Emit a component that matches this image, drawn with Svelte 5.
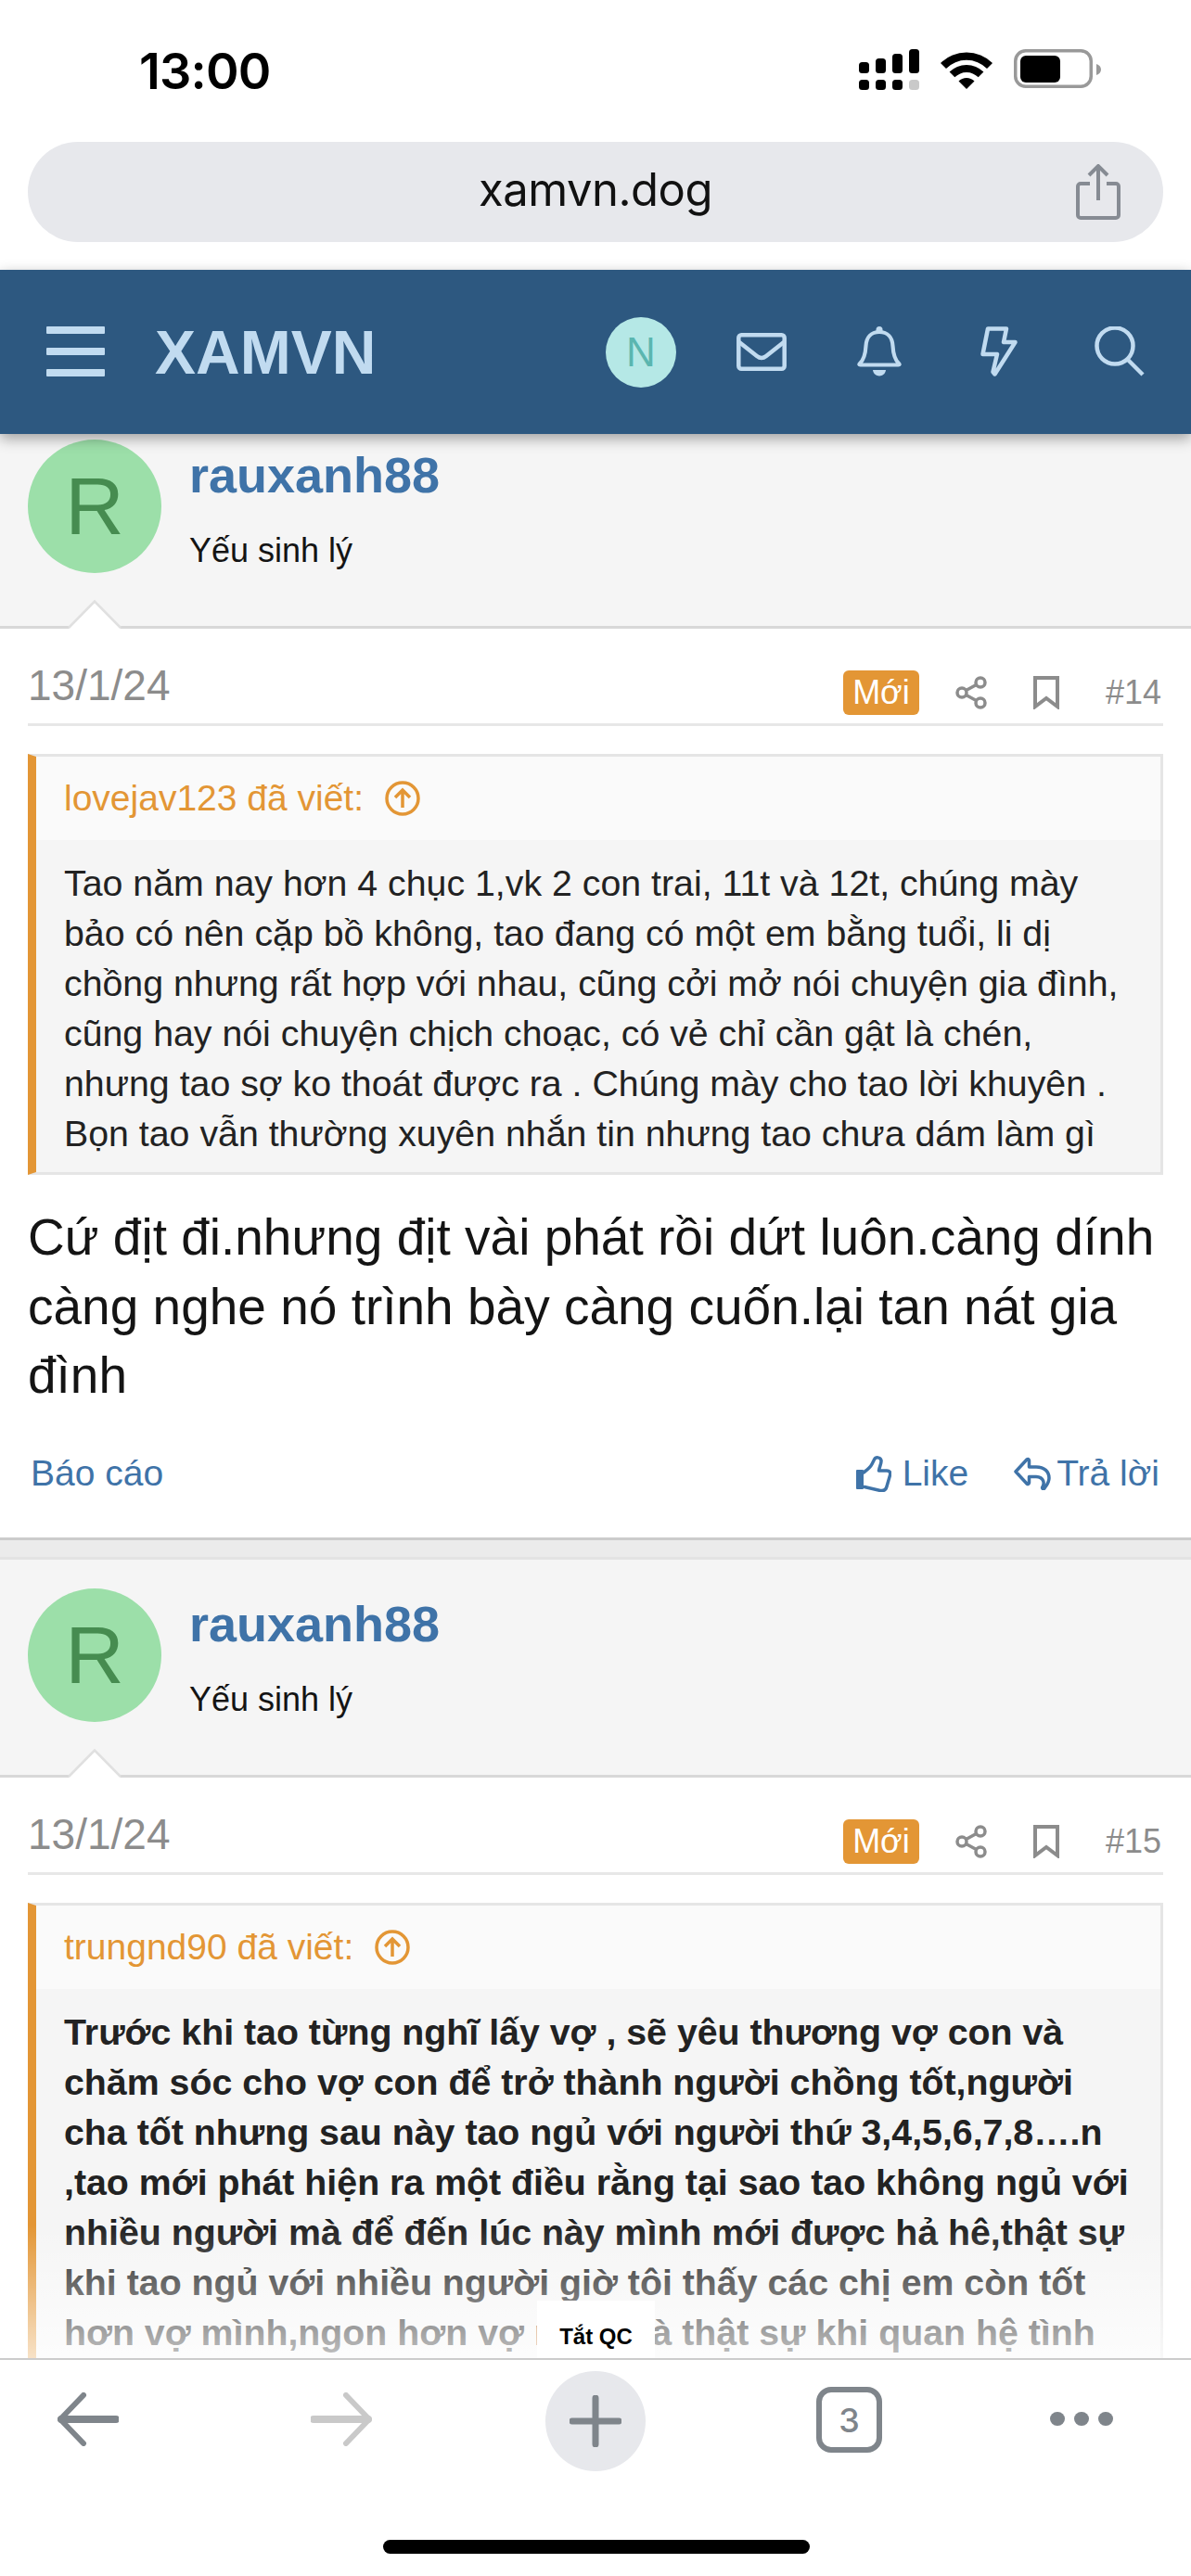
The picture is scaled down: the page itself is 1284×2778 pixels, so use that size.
<script lang="ts">
  type Post = { num: number; quoted: string; quote: string; bold: boolean; text?: string };

  const posts: Post[] = [
    {
      num: 14,
      quoted: 'lovejav123',
      bold: false,
      quote:
        'Tao năm nay hơn 4 chục 1,vk 2 con trai, 11t và 12t, chúng mày bảo có nên cặp bồ không, tao đang có một em bằng tuổi, li dị chồng nhưng rất hợp với nhau, cũng cởi mở nói chuyện gia đình, cũng hay nói chuyện chịch choạc, có vẻ chỉ cần gật là chén, nhưng tao sợ ko thoát được ra . Chúng mày cho tao lời khuyên . Bọn tao vẫn thường xuyên nhắn tin nhưng tao chưa dám làm gì',
      text: 'Cứ địt đi.nhưng địt vài phát rồi dứt luôn.càng dính càng nghe nó trình bày càng cuốn.lại tan nát gia đình'
    },
    {
      num: 15,
      quoted: 'trungnd90',
      bold: true,
      quote:
        'Trước khi tao từng nghĩ lấy vợ , sẽ yêu thương vợ con và chăm sóc cho vợ con để trở thành người chồng tốt,người cha tốt nhưng sau này tao ngủ với người thứ 3,4,5,6,7,8….n ,tao mới phát hiện ra một điều rằng tại sao tao không ngủ với nhiều người mà để đến lúc này mình mới được hả hê,thật sự khi tao ngủ với nhiều người giờ tôi thấy các chị em còn tốt hơn vợ mình,ngon hơn vợ mình và thật sự khi quan hệ tình'
    }
  ];
</script>

<div class="phone">
  <div class="status">
    <span class="time">13:00</span>
    <div class="status-icons">
      <svg class="signal" width="65" height="44" viewBox="0 0 65 44">
        <rect x="0" y="14" width="11" height="12" rx="3.5" />
        <rect x="18" y="10" width="11" height="16" rx="3.5" />
        <rect x="36" y="5" width="11" height="21" rx="3.5" />
        <rect x="54" y="0" width="11" height="26" rx="3.5" />
        <rect x="0" y="33" width="11" height="11" rx="3.5" />
        <rect x="18" y="33" width="11" height="11" rx="3.5" />
        <rect x="36" y="33" width="11" height="11" rx="3.5" />
        <rect x="54" y="33" width="11" height="11" rx="3.5" fill="#c9c9c9" />
      </svg>
      <svg class="wifi" width="56" height="42" viewBox="0 0 56 42">
        <path d="M0 14 A40 40 0 0 1 56 14 L50 20 A31 31 0 0 0 6 20 Z" />
        <path d="M9.6 23.6 A26 26 0 0 1 46.4 23.6 L40.7 29.3 A18 18 0 0 0 15.3 29.3 Z" />
        <path d="M19.5 33.5 A12 12 0 0 1 36.5 33.5 L28 42 Z" />
      </svg>
      <svg class="battery" width="94" height="42" viewBox="0 0 94 42">
        <rect x="1.75" y="1.75" width="81.5" height="38.5" rx="11" fill="none" stroke="#999" stroke-width="3.5" />
        <rect x="7" y="7" width="43" height="29" rx="6" />
        <path d="M89 16 C92 17 94 19 94 22 C94 25 92 27 89 28 Z" fill="#999" />
      </svg>
    </div>
  </div>

  <div class="urlbar-wrap">
    <div class="urlbar">
      <span class="url">xamvn.dog</span>
      <svg class="url-share" width="48" height="60" viewBox="0 0 48 60" fill="none" stroke="#868b93" stroke-width="4">
        <path d="M15 21 H5 a3 3 0 0 0 -3 3 V55 a3 3 0 0 0 3 3 H43 a3 3 0 0 0 3 -3 V24 a3 3 0 0 0 -3 -3 H33" />
        <path d="M24 39 V3 M14 12 L24 2 L34 12" />
      </svg>
    </div>
  </div>

  <header class="topbar">
    <div class="burger"><i></i><i></i><i></i></div>
    <span class="logo">XAMVN</span>
    <div class="top-icons">
      <span class="me">N</span>
      <svg class="mail" width="54" height="41" viewBox="0 0 54 41" fill="none" stroke="#c1dbf0" stroke-width="4.5" stroke-linejoin="round">
        <rect x="2.3" y="2.3" width="49.4" height="36.4" rx="3" />
        <path d="M3 10 L22 25 Q27 29 32 25 L51 10" />
      </svg>
      <svg class="bell" width="48" height="54" viewBox="0 0 48 54" fill="none" stroke="#c1dbf0" stroke-width="4.2" stroke-linejoin="round">
        <path d="M24 6 C15 6 10 12 9.5 21 C9 31 7 36 3 40 Q1.5 41.5 3.5 41.5 H44.5 Q46.5 41.5 45 40 C41 36 39 31 38.5 21 C38 12 33 6 24 6 Z" />
        <circle cx="24" cy="3.5" r="3.5" fill="#c1dbf0" stroke="none" />
        <path d="M17 47 H31 C30 55.5 18 55.5 17 47 Z" fill="#c1dbf0" stroke="none" />
      </svg>
      <svg class="bolt" width="40" height="54" viewBox="0 0 40 54" fill="none" stroke="#c1dbf0" stroke-width="4.5" stroke-linejoin="round">
        <path d="M8 2.5 H28 L25 17 H37.5 L15.5 51.5 L13.5 49 L18 30 H2.5 Z" />
      </svg>
      <svg class="search" width="54" height="54" viewBox="0 0 54 54" fill="none" stroke="#c1dbf0" stroke-width="4.5">
        <circle cx="22" cy="21" r="19.5" />
        <path d="M36 36 L52 52" />
      </svg>
    </div>
  </header>

  <div class="thread">
    {#each posts as p}
      <article class="post">
        <div class="user">
          <div class="avatar">R</div>
          <div class="user-info">
            <div class="name">rauxanh88</div>
            <div class="title">Yếu sinh lý</div>
          </div>
          <svg class="notch" width="58" height="31" viewBox="0 0 58 31">
            <path d="M1 31 L29 1.5 L57 31 Z" fill="#fff" />
            <path d="M1 30 L29 1.5 L57 30" fill="none" stroke="#e0e0e0" stroke-width="2.5" />
          </svg>
        </div>
        <div class="body">
          <div class="meta">
            <span class="date">13/1/24</span>
            <div class="meta-right">
              <span class="new">Mới</span>
              <svg width="34" height="36" viewBox="0 0 34 36" fill="none" stroke="#8c8c8c" stroke-width="3.5">
                <circle cx="27" cy="7" r="5" />
                <circle cx="7" cy="18" r="5" />
                <circle cx="27" cy="29" r="5" />
                <path d="M11.5 15.5 L22.5 9.5 M11.5 20.5 L22.5 26.5" />
              </svg>
              <svg width="28" height="36" viewBox="0 0 28 36" fill="none" stroke="#8c8c8c" stroke-width="4">
                <path d="M2 2 H26 V33 L14 24 L2 33 Z" />
              </svg>
              <span class="num">#{p.num}</span>
            </div>
          </div>
          <blockquote class="quote">
            <div class="quote-head">
              <span>{p.quoted} đã viết:</span>
              <svg width="38" height="38" viewBox="0 0 38 38" fill="none" stroke="#e39635" stroke-width="3.5">
                <circle cx="19" cy="19" r="17" />
                <path d="M19 29 V10 M11 18 L19 10 L27 18" />
              </svg>
            </div>
            <div class="quote-text" class:bold={p.bold}>{p.quote}</div>
          </blockquote>
          {#if p.text}
            <div class="text">{p.text}</div>
            <div class="actions">
              <span>Báo cáo</span>
              <div class="actions-right">
                <span class="act like">
                  <svg width="38" height="39" viewBox="0 0 38 39" fill="none" stroke="#3f73a8" stroke-width="3.5" stroke-linejoin="round" stroke-linecap="round">
                    <rect x="0" y="15" width="8" height="21" rx="1" fill="#3f73a8" stroke="none" />
                    <path d="M8 18 C12 15 15 13 17 9 L19.5 4 C21 1 26 1 27 5 C27.5 8 25 12 24.5 16 H33 C36 16 37.5 18 36.5 21 L33 33 C32 37 29 38 26 37.5 L9 33.5" />
                  </svg>
                  Like
                </span>
                <span class="act reply">
                  <svg width="40" height="36" viewBox="0 0 40 36" fill="none" stroke="#3f73a8" stroke-width="3.5" stroke-linejoin="round">
                    <path d="M2 16 L14 3 Q16 1.5 16.5 4 V11 H24 C33 11 38 16 38 23 C38 28 35 31 33 34 C31.5 35.5 30 34 31 32.5 C33 29 33 22 24 21.5 H16.5 V28 Q16 30.5 14 29 Z" />
                  </svg>
                  Trả lời
                </span>
              </div>
            </div>
          {/if}
        </div>
      </article>
    {/each}
  </div>

  <div class="fade"></div>
  <div class="ad-off">Tắt QC</div>

  <nav class="toolbar">
    <svg width="66" height="58" viewBox="0 0 66 58" fill="none" stroke="#7f858b" stroke-width="6" stroke-linecap="round" stroke-linejoin="round">
      <path d="M28 3 L3 29 L28 55" />
      <path d="M4 29 H63" stroke-width="8" />
    </svg>
    <svg class="forward" width="66" height="58" viewBox="0 0 66 58" fill="none" stroke="#c9c9c9" stroke-width="6" stroke-linecap="round" stroke-linejoin="round">
      <path d="M38 3 L63 29 L38 55" />
      <path d="M3 29 H62" stroke-width="8" />
    </svg>
    <div class="plus">
      <svg width="56" height="56" viewBox="0 0 56 56" stroke="#7f858b" stroke-width="7" stroke-linecap="round">
        <path d="M28 3 V53" />
        <path d="M3 28 H53" />
      </svg>
    </div>
    <div class="tabs">3</div>
    <div class="dots"><i></i><i></i><i></i></div>
  </nav>
  <div class="home"></div>
</div>

<style>
  :global(body) { margin: 0; background: #fff; }
  .phone {
    position: relative;
    width: 1284px;
    height: 2778px;
    overflow: hidden;
    display: flex;
    flex-direction: column;
    font-family: "Liberation Sans", Arial, sans-serif;
    background: #fff;
  }

  .status { height: 153px; flex: none; display: flex; justify-content: space-between; box-sizing: border-box; padding: 43px 97px 0 150px; }
  .time { font-family: Inter, sans-serif; font-weight: 600; font-size: 54px; line-height: 68px; color: #000; letter-spacing: -0.8px; }
  .status-icons { display: flex; align-items: flex-start; gap: 23px; padding-top: 10px; }
  .signal { fill: #000; }
  .wifi { margin-top: 1px; }

  .urlbar-wrap { height: 138px; flex: none; padding: 0 30px; }
  .urlbar { position: relative; height: 108px; box-sizing: border-box; padding-bottom: 5px; border-radius: 54px; background: #e7e8ec; display: flex; align-items: center; justify-content: center; }
  .url { font-family: Inter, sans-serif; font-size: 49px; color: #111; letter-spacing: -0.5px; }
  .url-share { position: absolute; right: 46px; top: 24px; }

  .topbar { position: relative; z-index: 3; height: 177px; flex: none; box-sizing: border-box; background: #2d5880; display: flex; align-items: center; padding: 0 50px; box-shadow: 0 5px 14px rgba(0,0,0,.35); }
  .burger { display: flex; flex-direction: column; gap: 15px; width: 63px; margin-top: -1px; }
  .burger i { display: block; height: 8px; background: #c1dbf0; border-radius: 1px; }
  .logo { margin-left: 54px; font-size: 66px; font-weight: 700; color: #c1dbf0; line-height: 1; }
  .top-icons { margin-left: auto; display: flex; align-items: center; }
  .top-icons svg { margin-top: -1px; }
  .mail { margin-left: 65px; }
  .bell { margin-left: 76px; }
  .bolt { margin-left: 85px; }
  .search { margin-left: 83px; }
  .me { width: 76px; height: 76px; border-radius: 50%; background: #b5e8e6; color: #5bb6b0; font-size: 44px; display: flex; align-items: center; justify-content: center; }

  .thread { margin-top: -25px; flex: none; background: #ebebeb; }
  .post { border-top: 3px solid #e3e3e3; }
  .post + .post { margin-top: 18px; }
  .post:first-child { border-top: 0; }

  .user { position: relative; box-sizing: border-box; height: 235px; background: #f5f5f5; border-bottom: 3px solid #d8d8d8; padding: 30px; display: flex; gap: 30px; }
  .avatar { width: 144px; height: 144px; margin-top: 1px; border-radius: 50%; background: #9cdfa9; color: #468c50; font-size: 88px; display: flex; align-items: center; justify-content: center; flex: none; }
  .user-info { padding-top: 9px; }
  .name { font-size: 54px; font-weight: 700; color: #3f73a8; line-height: 60px; }
  .title { font-size: 36px; color: #141414; line-height: 48px; margin-top: 28px; }
  .notch { position: absolute; left: 73px; bottom: -3px; }

  .body { background: #fff; padding: 0 30px; overflow: hidden; border-bottom: 3px solid #cccccc; }
  .meta { height: 105px; box-sizing: border-box; border-bottom: 3px solid #e7e7e7; display: flex; justify-content: space-between; align-items: flex-start; padding-top: 38px; }
  .date { font-size: 46px; color: #8c8c8c; line-height: 1; }
  .meta-right { display: flex; align-items: center; margin-top: 7px; margin-right: 2px; }
  .new { width: 82px; height: 48px; background: #e39635; border-radius: 6px; color: #fff; font-size: 36px; text-align: center; line-height: 48px; }
  .meta-right svg:nth-of-type(1) { margin-left: 39px; }
  .meta-right svg:nth-of-type(2) { margin-left: 50px; }
  .num { font-size: 36px; color: #8c8c8c; margin-left: 50px; }

  .quote { margin: 30px 0 0; background: #f5f5f5; border: 3px solid #e5e5e5; border-left: 9px solid #e39635; }
  .quote-head { height: 90px; background: #fafafa; display: flex; align-items: center; gap: 23px; padding-left: 30px; color: #e39635; font-size: 39px; }
  .quote-text { padding: 19px 25px 15px 30px; font-size: 39.3px; line-height: 54px; color: #222; }
  .quote-text.bold { font-weight: 700; }

  .text { margin-top: 30px; font-size: 55px; line-height: 74.5px; color: #141414; }
  .actions { display: flex; justify-content: space-between; align-items: center; height: 137px; font-size: 39px; color: #3f73a8; padding: 0 4px 0 3px; }
  .actions-right { display: flex; gap: 49px; }
  .act { display: flex; align-items: center; }
  .like { gap: 12px; }
  .reply { gap: 6px; }

  .fade { position: absolute; left: 0; right: 0; top: 2400px; height: 143px; background: linear-gradient(to bottom, rgba(255,255,255,0), rgba(255,255,255,.72)); z-index: 1; }
  .ad-off { position: absolute; z-index: 2; left: 579px; top: 2481px; width: 127px; height: 62px; background: #fff; color: #000; font-size: 24px; font-weight: 700; text-align: center; line-height: 78px; }

  .toolbar { position: absolute; z-index: 2; left: 0; right: 0; top: 2543px; bottom: 0; background: #fff; border-top: 2px solid #ccc; box-sizing: border-box; display: flex; align-items: flex-start; gap: 184px; padding: 35px 0 0 62px; }
  .forward { margin-left: 23px; }
  .plus { width: 108px; height: 108px; margin-top: -23px; margin-left: 3px; border-radius: 50%; background: #e7e8ec; display: flex; align-items: center; justify-content: center; }
  .tabs { width: 71px; height: 71px; margin-top: -6px; box-sizing: border-box; border: 6px solid #7f858b; border-radius: 16px; color: #7f858b; font-size: 36px; font-family: Inter, sans-serif; font-weight: 500; display: flex; align-items: center; justify-content: center; }
  .dots { display: flex; gap: 10.5px; margin-top: 21px; margin-left: -3px; }
  .dots i { display: block; width: 15.5px; height: 15px; border-radius: 50%; background: #7f858b; }
  .home { position: absolute; z-index: 3; left: 413px; top: 2739px; width: 460px; height: 15px; border-radius: 8px; background: #000; }
</style>
